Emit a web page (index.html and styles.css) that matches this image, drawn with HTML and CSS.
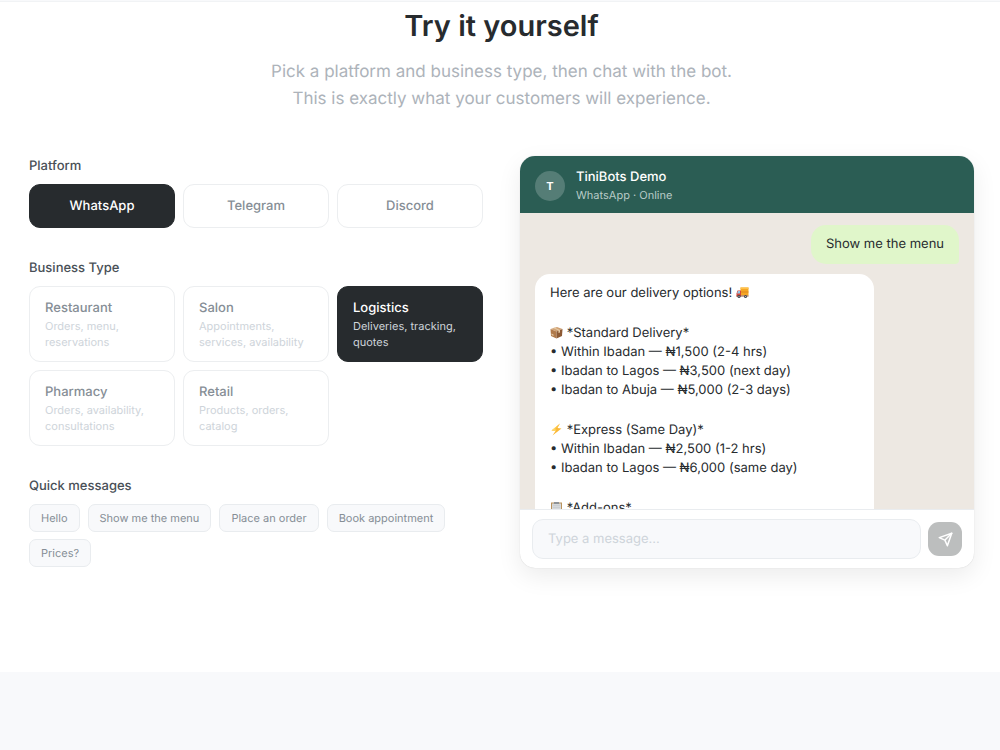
FILE: index.html
```html
<!DOCTYPE html>
<html lang="en">
<head>
    <meta charset="utf-8">
    <meta name="viewport" content="width=device-width, initial-scale=1">
    <title>TiniBots Demo</title>
    <link rel="stylesheet" href="styles.css">
</head>
<body>

<section class="demo">
  <h2>Try it yourself</h2>
  <p class="intro">Pick a platform and business type, then chat with the bot.<br>This is exactly what your customers will experience.</p>

  <div class="columns">
    <div class="options">
      <div class="group">
        <h3>Platform</h3>
        <div class="grid">
          <button type="button" class="platform active">WhatsApp</button>
          <button type="button" class="platform">Telegram</button>
          <button type="button" class="platform">Discord</button>
        </div>
      </div>

      <div class="group">
        <h3>Business Type</h3>
        <div class="grid">
          <button type="button" class="business"><span class="name">Restaurant</span><span class="desc">Orders, menu, reservations</span></button>
          <button type="button" class="business"><span class="name">Salon</span><span class="desc">Appointments, services, availability</span></button>
          <button type="button" class="business active"><span class="name">Logistics</span><span class="desc">Deliveries, tracking, quotes</span></button>
          <button type="button" class="business"><span class="name">Pharmacy</span><span class="desc">Orders, availability, consultations</span></button>
          <button type="button" class="business"><span class="name">Retail</span><span class="desc">Products, orders, catalog</span></button>
        </div>
      </div>

      <div class="group">
        <h3>Quick messages</h3>
        <div class="chips">
          <button type="button" class="chip">Hello</button>
          <button type="button" class="chip">Show me the menu</button>
          <button type="button" class="chip">Place an order</button>
          <button type="button" class="chip">Book appointment</button>
          <button type="button" class="chip">Prices?</button>
        </div>
      </div>
    </div>

    <div class="chat">
      <div class="chat-header">
        <div class="avatar">T</div>
        <div>
          <div class="chat-name">TiniBots Demo</div>
          <div class="chat-status">WhatsApp · Online</div>
        </div>
      </div>

      <div class="messages">
        <div class="bubble user">Show me the menu</div>
        <div class="bubble bot">
          <p>Here are our delivery options!
            <svg class="emoji" viewBox="0 0 26 26" aria-hidden="true">
              <path d="M9 3h16v16H9z" fill="#f5a623"/>
              <path d="M9 3h16v3H9z" fill="#ffc14a"/>
              <path d="M9 11h16v2H9z" fill="#dd8620"/>
              <path d="M3 9h7v12H1v-6z" fill="#d8473a"/>
              <path d="M4 10h4v5H2z" fill="#8fc7e8"/>
              <path d="M1 19h24v2H1z" fill="#8b4b36"/>
              <circle cx="6" cy="21" r="3" fill="#40464d"/>
              <circle cx="19" cy="21" r="3" fill="#40464d"/>
              <circle cx="6" cy="21" r="1" fill="#cfd3d7"/>
              <circle cx="19" cy="21" r="1" fill="#cfd3d7"/>
            </svg></p>
          <p><svg class="emoji" viewBox="0 0 26 26" aria-hidden="true">
              <path d="M1 6l13-4 11 4-12 5z" fill="#d0a173"/>
              <path d="M1 6l12 5v14L2 20z" fill="#b07a4b"/>
              <path d="M25 6l-12 5v14l11-5z" fill="#8d5a34"/>
              <path d="M6 4l3-1 11 5v5l-3 1V9z" fill="#e5c9a4"/>
              <path d="M3 15l4 2v3l-4-2z" fill="#e5c9a4"/>
            </svg> *Standard Delivery*<br>
            • Within Ibadan — ₦1,500 (2-4 hrs)<br>
            • Ibadan to Lagos — ₦3,500 (next day)<br>
            • Ibadan to Abuja — ₦5,000 (2-3 days)</p>
          <p><svg class="emoji" viewBox="0 0 26 26" aria-hidden="true">
              <path d="M20 1L3 15l8 1-6 9 18-14-8-1z" fill="#fbb836"/>
              <path d="M20 1L3 15l8 1 2-3H9z" fill="#ffd968"/>
            </svg> *Express (Same Day)*<br>
            • Within Ibadan — ₦2,500 (1-2 hrs)<br>
            • Ibadan to Lagos — ₦6,000 (same day)</p>
          <p><svg class="emoji" viewBox="0 0 26 26" aria-hidden="true">
              <path d="M2 3h22v23H2z" fill="#b9925c"/>
              <path d="M4 5h18v20H4z" fill="#d5d8db"/>
              <path d="M6 9h14v1H6zM6 13h14v1H6zM6 17h14v1H6z" fill="#c0c4c8"/>
              <path d="M8 2h10v4H8z" fill="#8d9297"/>
            </svg> *Add-ons*</p>
        </div>
      </div>

      <form class="composer">
        <input type="text" aria-label="Message" placeholder="Type a message...">
        <button type="button" class="send" aria-label="Send" disabled>
          <svg viewBox="0 0 24 24" fill="none" stroke="currentColor" stroke-width="2.4" stroke-linecap="round" stroke-linejoin="round">
            <path d="M22 2L12 12"/>
            <path d="M22 2l-7 20-4-9-9-4z"/>
          </svg>
        </button>
      </form>
    </div>
  </div>
</section>

</body>
</html>
```
FILE: styles.css
```css
* {
  box-sizing: border-box;
  margin: 0;
  padding: 0;
}
body {
  background-color: #f8f9fb;
  font-family: Inter, "Liberation Sans", sans-serif;
  text-rendering: geometricPrecision;
  color: #272b2e;
}
button, input {
  font-family: inherit;
  text-rendering: inherit;
}
button {
  cursor: pointer;
}
.demo {
  margin-top: 1px;
  padding: 6px 26px 104px 29px;
  border-top: 1px solid #f1f3f5;
  background-color: white;
}
h2 {
  font-size: 29px;
  font-weight: 600;
  line-height: 36px;
  text-align: center;
}
.intro {
  margin-top: 15px;
  font-size: 17px;
  line-height: 27px;
  text-align: center;
  color: #adb3ba;
}
.columns {
  display: grid;
  grid-template-columns: 1fr 1fr;
  gap: 37px;
  margin-top: 43px;
  align-items: start;
}

/* left column */
.options {
  display: flex;
  flex-direction: column;
  gap: 30px;
}
h3 {
  margin-bottom: 8px;
  font-size: 13px;
  font-weight: 500;
  line-height: 20px;
  color: #495057;
}
.grid {
  display: grid;
  grid-template-columns: repeat(3, 1fr);
  gap: 8px;
}
.platform, .business {
  border: 1px solid #eceef0;
  border-radius: 11px;
  background-color: white;
  color: #868e96;
  font-size: 13px;
  font-weight: 500;
}
.platform {
  height: 44px;
}
.business {
  padding: 11px 15px;
  text-align: left;
}
.name, .desc {
  display: block;
}
.name {
  line-height: 20px;
}
.desc {
  font-size: 11px;
  font-weight: 400;
  line-height: 16px;
  color: #ced4da;
}
.active {
  border-color: #272b2e;
  background-color: #272b2e;
  color: white;
}
.active .desc {
  color: #ced4da;
}
.chips {
  display: flex;
  flex-wrap: wrap;
  gap: 7px 8px;
}
.chip {
  padding: 5px 11px;
  border: 1px solid #e9ecef;
  border-radius: 7px;
  background-color: #f8f9fb;
  color: #868e96;
  font-size: 11px;
  line-height: 16px;
}

/* chat window */
.chat {
  overflow: hidden;
  border-radius: 15px;
  background-color: white;
  box-shadow: 0 0 1px rgba(0,0,0,0.2), 0 8px 24px rgba(0,0,0,0.08);
}
.chat-header {
  display: flex;
  align-items: center;
  gap: 11px;
  padding: 11px 15px 9px;
  background-color: #2b5d54;
  color: white;
}
.avatar {
  width: 30px;
  height: 30px;
  border-radius: 50%;
  background-color: #557d76;
  font-size: 11px;
  font-weight: 700;
  line-height: 30px;
  text-align: center;
}
.chat-name {
  font-size: 13px;
  font-weight: 500;
  line-height: 20px;
}
.chat-status {
  font-size: 11px;
  line-height: 17px;
  color: #b8cbc7;
}
.messages {
  display: flex;
  flex-direction: column;
  gap: 10px;
  height: 296px;
  padding: 12px 15px;
  overflow: hidden;
  background-color: #ede8e2;
}
.bubble {
  flex-shrink: 0;
  padding: 10px 15px;
  border-radius: 15px;
  font-size: 13px;
  line-height: 19px;
}
.user {
  align-self: flex-end;
  border-bottom-right-radius: 4px;
  background-color: #e0f6ca;
}
.bot {
  width: 80%;
  border-bottom-left-radius: 4px;
  background-color: white;
}
.bot p + p {
  margin-top: 21px;
}
.emoji {
  width: 13px;
  height: 13px;
  vertical-align: -2px;
}
.composer {
  display: flex;
  align-items: center;
  gap: 7px;
  padding: 9px 12px;
  border-top: 1px solid #e9ecef;
}
.composer input {
  flex: 1;
  min-width: 0;
  height: 40px;
  padding: 0 15px;
  border: 1px solid #e9ecef;
  border-radius: 11px;
  background-color: #f8f9fb;
  font-size: 13px;
}
.composer input::placeholder {
  color: #ced4da;
}
.send {
  display: flex;
  align-items: center;
  justify-content: center;
  width: 34px;
  height: 34px;
  border: none;
  border-radius: 11px;
  background-color: #bcbebe;
  color: white;
}
.send svg {
  width: 15px;
  height: 15px;
}

@media (max-width: 700px) {
  .columns {
    grid-template-columns: 1fr;
  }
}
```
